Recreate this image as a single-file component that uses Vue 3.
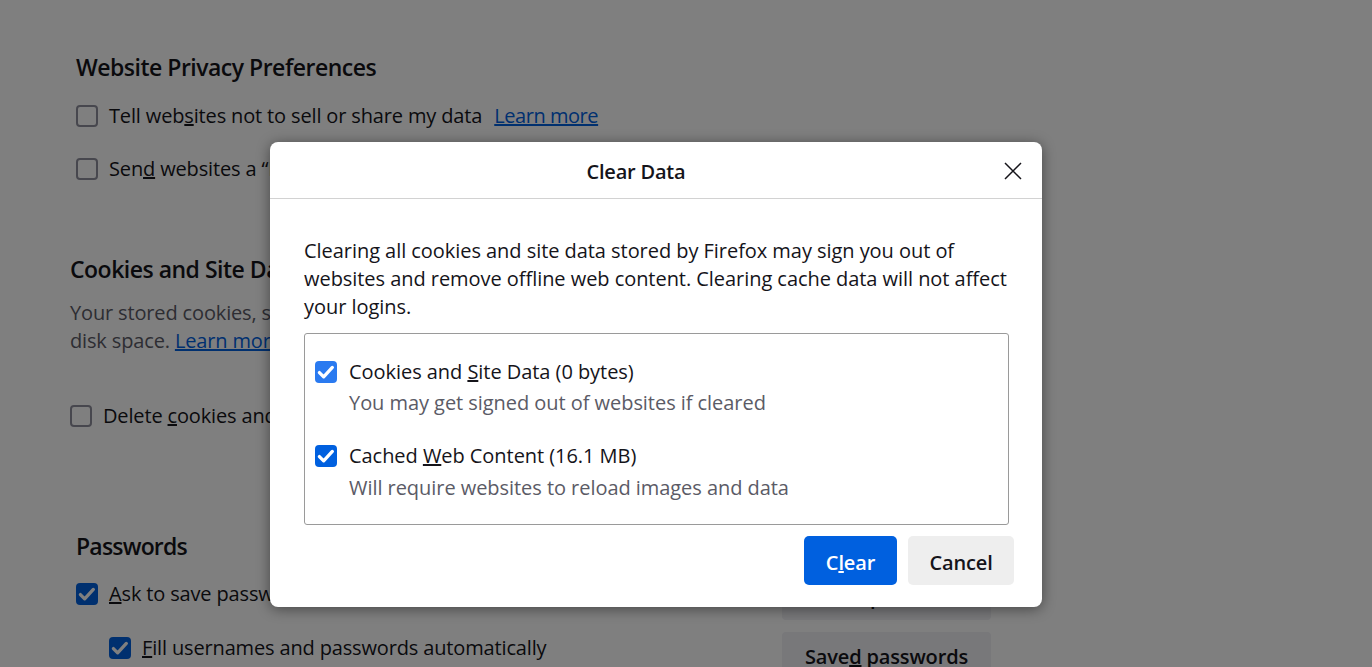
<template>
  <div class="page">
    <main class="prefs">
      <section class="group privacy">
        <h2>Website Privacy Preferences</h2>
        <label class="row">
          <span class="box"></span>
          <span>Tell web<u>s</u>ites not to sell or share my data&nbsp; <a class="tight">Learn more</a></span>
        </label>
        <label class="row">
          <span class="box"></span>
          <span>Sen<u>d</u> websites a “Do Not Track” request</span>
        </label>
      </section>

      <section class="group cookies">
        <h2>Cookies and Site Data</h2>
        <p class="muted">Your stored cookies, site data, and cache are currently using 16.1 MB of<br />disk space. <a>Learn more</a></p>
        <label class="row">
          <span class="box"></span>
          <span>Delete <u>c</u>ookies and site data when Firefox is closed</span>
        </label>
      </section>

      <section class="group passwords">
        <div class="pass-left">
          <h2>Passwords</h2>
          <label class="row">
            <span class="box on">
              <svg viewBox="0 0 16 16"><path d="M3.2 8.4l3.1 3.1 6.3-6.8" /></svg>
            </span>
            <span><u>A</u>sk to save passwords</span>
          </label>
          <label class="row sub">
            <span class="box on">
              <svg viewBox="0 0 16 16"><path d="M3.2 8.4l3.1 3.1 6.3-6.8" /></svg>
            </span>
            <span><u>F</u>ill usernames and passwords automatically</span>
          </label>
        </div>
        <div class="pass-right">
          <button class="page-btn"><u>E</u>xceptions…</button>
          <button class="page-btn">Save<u>d</u> passwords</button>
        </div>
      </section>
    </main>

    <div class="overlay">
      <div class="dialog">
        <header class="dialog-head">
          <h1>Clear Data</h1>
          <button class="close" aria-label="Close">
            <svg viewBox="0 0 18 18"><path d="M1 1l16 16M17 1L1 17" /></svg>
          </button>
        </header>
        <div class="dialog-body">
          <p class="intro">Clearing all cookies and site data stored by Firefox may sign you out of websites and remove offline web content. Clearing cache data will not affect your logins.</p>
          <div class="options">
            <div v-for="opt in options" :key="opt.hint" class="option">
              <span class="check" :class="opt.cls">
                <svg viewBox="0 0 16 16"><path d="M3.2 8.4l3.1 3.1 6.3-6.8" /></svg>
              </span>
              <div>
                <div class="opt-label">{{ opt.before }}<u>{{ opt.key }}</u>{{ opt.after }}</div>
                <div class="opt-hint">{{ opt.hint }}</div>
              </div>
            </div>
          </div>
          <div class="actions">
            <button class="btn primary">C<u>l</u>ear</button>
            <button class="btn cancel">Cancel</button>
          </div>
        </div>
      </div>
    </div>
  </div>
</template>

<script setup>
const options = [
  { before: 'Cookies and ', key: 'S', after: 'ite Data (0 bytes)', hint: 'You may get signed out of websites if cleared', cls: 'focus' },
  { before: 'Cached ', key: 'W', after: 'eb Content (16.1 MB)', hint: 'Will require websites to reload images and data', cls: '' }
]
</script>

<style>
html, body {
  margin: 0;
  height: 100%;
  overflow: hidden;
  background: #fff;
}
</style>

<style scoped>
.page {
  position: relative;
  height: 667px;
  overflow: hidden;
  font-family: "Open Sans", "Noto Sans", sans-serif;
  font-size: 20px;
  letter-spacing: -0.15px;
  color: #15141a;
}

.prefs {
  padding: 51px 0 0 76px;
}

h2 {
  margin: 0;
  font-size: 23px;
  line-height: 32px;
  font-weight: 600;
  letter-spacing: -0.5px;
}

.passwords h2 {
  letter-spacing: -0.8px;
}

.row {
  display: flex;
  align-items: center;
  gap: 11px;
  line-height: 28px;
  margin-top: 25px;
}

.privacy .row:first-of-type {
  margin-top: 19px;
}

.muted {
  margin: 14px 0 0;
  line-height: 28px;
  color: #5b5b66;
}

a {
  color: #0060df;
  text-decoration: underline;
}

a.tight {
  margin-left: 2px;
  letter-spacing: -0.45px;
}

.box {
  flex: none;
  width: 22px;
  height: 22px;
  box-sizing: border-box;
  border: 2px solid #8f8f9d;
  border-radius: 4px;
}

.box.on {
  border: none;
  background: #0060df;
}

.box svg,
.check svg {
  display: block;
  width: 22px;
  height: 22px;
  fill: none;
  stroke: #fff;
  stroke-width: 2.4;
  stroke-linecap: round;
  stroke-linejoin: round;
}

.cookies {
  margin: 70px 0 0 -6px;
}

.cookies .row {
  margin-top: 47px;
}

.passwords {
  display: flex;
  width: 915px;
  justify-content: space-between;
  margin-top: 100px;
}

.passwords .row {
  margin-top: 18px;
}

.passwords .row.sub {
  margin: 26px 0 0 33px;
}

.pass-right {
  display: flex;
  flex-direction: column;
  gap: 12px;
  padding-top: 42px;
}

.page-btn {
  width: 209px;
  height: 48px;
  border: none;
  border-radius: 4px;
  background: #f0f0f4;
  font: inherit;
  font-weight: 600;
  letter-spacing: inherit;
  color: #15141a;
}

.overlay {
  position: absolute;
  inset: 0;
  background: rgba(0, 0, 0, 0.5);
}

.dialog {
  position: absolute;
  left: 270px;
  top: 142px;
  width: 772px;
  height: 465px;
  border-radius: 8px;
  background: #fff;
  box-shadow: 0 2px 14px rgba(0, 0, 0, 0.45);
}

.dialog-head {
  position: relative;
  display: flex;
  align-items: center;
  justify-content: center;
  box-sizing: border-box;
  height: 57px;
  padding: 2px 40px 0 0;
  border-bottom: 1px solid #d2d2d2;
}

h1 {
  margin: 0;
  font-size: 20px;
  font-weight: 600;
  letter-spacing: -0.2px;
}

.close {
  position: absolute;
  right: 20px;
  top: 20px;
  width: 18px;
  height: 18px;
  padding: 0;
  border: none;
  background: none;
}

.close svg {
  display: block;
  width: 18px;
  height: 18px;
  fill: none;
  stroke: #15141a;
  stroke-width: 1.5;
}

.dialog-body {
  padding: 38px 28px 0 34px;
  letter-spacing: -0.05px;
}

.intro {
  margin: 0 5px 0 0;
  line-height: 28px;
}

.options {
  box-sizing: border-box;
  height: 192px;
  margin: 12px 5px 0 0;
  padding: 23px 10px 0;
  border: 1px solid #9a9a9a;
  border-radius: 3px;
}

.option {
  display: flex;
  gap: 12px;
  margin-bottom: 23px;
}

.check {
  flex: none;
  width: 22px;
  height: 22px;
  margin-top: 4px;
  border-radius: 4px;
  background: #0060df;
}

.check.focus {
  background: #2a7af0;
}

.opt-label {
  line-height: 30px;
}

.opt-hint {
  margin-top: 1px;
  line-height: 30px;
  color: #5b5b66;
}

.option + .option .opt-hint {
  margin-top: 2px;
}

.actions {
  display: flex;
  justify-content: flex-end;
  gap: 11px;
  margin-top: 11px;
}

.btn {
  width: 93px;
  height: 49px;
  padding: 4px 0 0;
  border: none;
  border-radius: 5px;
  background: #eeeeee;
  font: inherit;
  font-weight: 600;
  letter-spacing: -0.15px;
  color: #15141a;
}

.btn.primary {
  background: #0060df;
  color: #fff;
}

.btn.cancel {
  width: 106px;
}
</style>
